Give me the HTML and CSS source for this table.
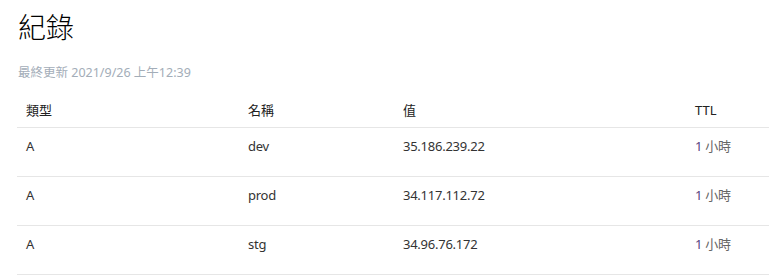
FILE: index.html
```html
<!DOCTYPE html>
<html lang="zh-Hant">
<head>
<meta charset="utf-8">
<link rel="stylesheet" href="styles.css">
</head>
<body>
<div class="page">
  <h1 class="title">紀錄</h1>
  <div class="updated">最終更新 2021/9/26 上午12:39</div>
  <div class="table">
    <div class="row head">
      <div class="cell">類型</div>
      <div class="cell">名稱</div>
      <div class="cell">值</div>
      <div class="cell">TTL</div>
    </div>
    <div class="row">
      <div class="cell">A</div>
      <div class="cell">dev</div>
      <div class="cell">35.186.239.22</div>
      <div class="cell"><span class="num">1</span> <span class="unit">小時</span></div>
    </div>
    <div class="row">
      <div class="cell">A</div>
      <div class="cell">prod</div>
      <div class="cell">34.117.112.72</div>
      <div class="cell"><span class="num">1</span> <span class="unit">小時</span></div>
    </div>
    <div class="row">
      <div class="cell">A</div>
      <div class="cell">stg</div>
      <div class="cell">34.96.76.172</div>
      <div class="cell"><span class="num">1</span> <span class="unit">小時</span></div>
    </div>
  </div>
</div>
</body>
</html>
```
FILE: styles.css
```css
html, body {
  margin: 0;
  padding: 0;
  background: #fff;
}
body {
  font-family: "Noto Sans", "Noto Sans CJK TC", sans-serif;
  color: #333;
  overflow: hidden;
}
.page {
  padding: 7px 0 0 17px;
}
.title {
  margin: 0 0 0 1px;
  font-family: "Noto Sans CJK TC", sans-serif;
  font-weight: 300;
  font-size: 28px;
  line-height: 38px;
  color: #000;
}
.updated {
  margin-top: 20px;
  margin-left: 1px;
  font-size: 12.5px;
  line-height: 16px;
  color: #a3adb8;
}
.table {
  margin-top: 14px;
  width: 760px;
}
.row {
  display: grid;
  grid-template-columns: 222px 155px 292px 91px;
  border-bottom: 1px solid #e6e6e6;
  font-size: 13px;
  line-height: 18px;
  height: 48px;
  align-items: start;
}
.row.head {
  height: 32px;
  color: #222;
}
.cell {
  padding: 9px 0 0 9px;
  white-space: nowrap;
  letter-spacing: -0.25px;
}
.row.head .cell {
  padding-top: 6px;
  letter-spacing: 0;
}
.num {
  color: #5b3f7e;
}
.unit {
  color: #666;
}
```
